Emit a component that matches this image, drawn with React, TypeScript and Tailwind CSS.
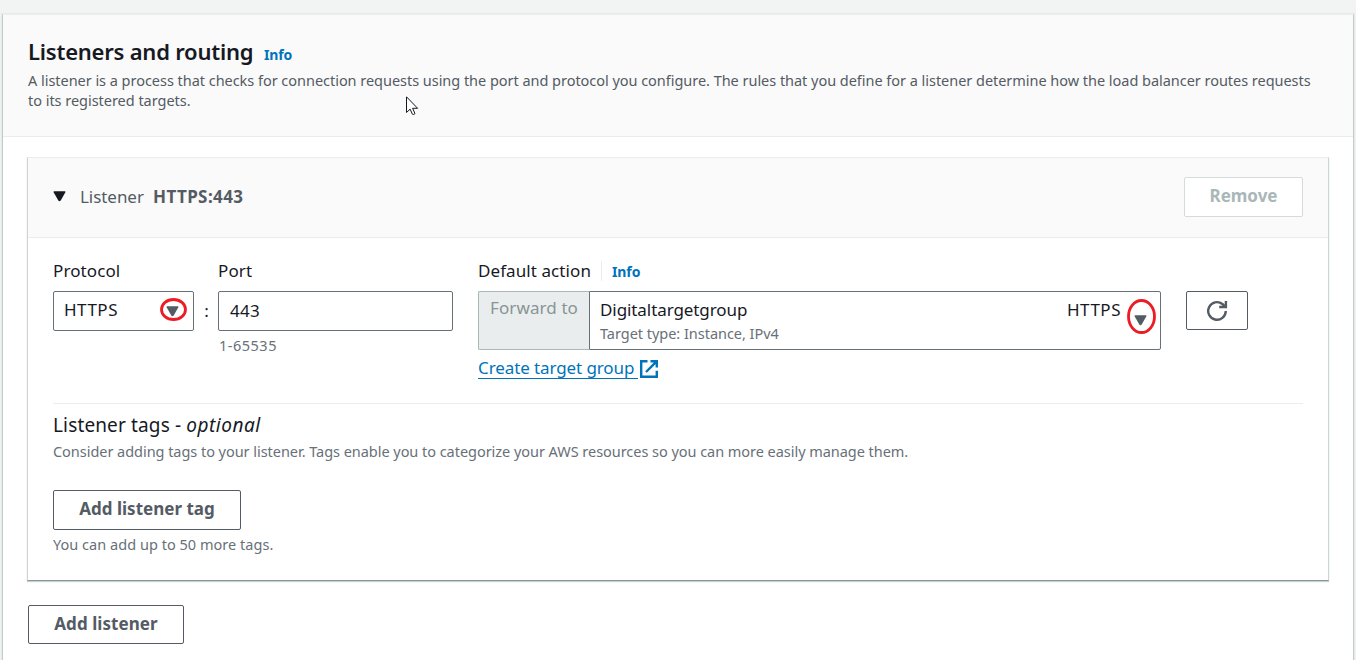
import React from "react";

function Caret({ className = "" }: { className?: string }) {
  return (
    <svg viewBox="0 0 13 11" className={`block h-[11px] w-[13px] shrink-0 ${className}`} fill="currentColor">
      <path d="M1.2 0.3h10.6q1.1 0 0.6 1L7.7 9.6q-1.2 1.5-2.4 0L0.6 1.3Q0.1 0.3 1.2 0.3z" />
    </svg>
  );
}

function Ring({ className = "", rx, ry }: { className?: string; rx: number; ry: number }) {
  const w = rx * 2 + 3;
  const h = ry * 2 + 3;
  return (
    <svg width={w} height={h} viewBox={`0 0 ${w} ${h}`} className={`pointer-events-none absolute ${className}`} fill="none">
      <ellipse cx={w / 2} cy={h / 2} rx={rx} ry={ry} stroke="#ed1c24" strokeWidth="2.8" />
    </svg>
  );
}

function Pointer() {
  return (
    <svg viewBox="0 0 13 20" className="pointer-events-none absolute left-[406px] top-[96px] h-5 w-[13px]">
      <path
        d="M0.5 0.8V16.5L4.1 13.1L6.4 18.2Q7.8 19 9 17.6L6.6 12.3H11.6z"
        fill="#fff"
        stroke="#16191f"
        strokeWidth="1"
      />
    </svg>
  );
}

function OutlineButton({ children, className = "" }: { children: React.ReactNode; className?: string }) {
  return (
    <button
      className={`flex items-center justify-center rounded-[2px] border bg-white pb-0.5 text-[17px] leading-6 font-bold whitespace-nowrap ${className}`}
    >
      {children}
    </button>
  );
}

export default function App() {
  return (
    <div className="relative h-[660px] w-[1356px] overflow-hidden bg-[#f2f3f3] pt-[14px] pl-0.5 font-['Noto_Sans',sans-serif] text-[#16191f]">
      <section className="h-[660px] w-[1352px] border-x border-t border-x-[#c3cbcb] border-t-[#eaeded] bg-white shadow-[0_0_1px_1px_#e6eaea]">
        <header className="h-[122px] border-b border-[#eaeded] bg-[#fafafa] pt-[21px] pl-[25px]">
          <div className="flex items-baseline whitespace-nowrap">
            <h2 className="w-[236px] text-[22px] leading-[30px] font-semibold tracking-[-0.22px]">Listeners and routing</h2>
            <a className="text-[14px] font-bold tracking-[-0.15px] text-[#0073bb]">Info</a>
          </div>
          <p className="pt-1 text-[14.5px] leading-5 whitespace-nowrap text-[#545b64]">
            <span className="block tracking-[-0.033px]">
              A listener is a process that checks for connection requests using the port and protocol you configure. The
              rules that you define for a listener determine how the load balancer routes requests
            </span>
            <span className="block tracking-[-0.03px]">to its registered targets.</span>
          </p>
        </header>

        <div className="px-6 pt-5">
          <div className="h-[424px] w-[1302px] border border-t-[#eaeded] border-x-[#cdd4d5] border-b-[#879596] bg-white shadow-[0_1px_1px_0_#c9d0d1]">
            <div className="flex h-20 items-center justify-between border-b border-[#eaeded] bg-[#fafafa] pr-[25px] pb-0.5 pl-[25px]">
              <div className="flex items-center text-[17px] leading-6 whitespace-nowrap text-[#545b64]">
                <Caret className="-mt-px text-[#16191f]" />
                <span className="ml-3.5 w-[73px] tracking-[-0.05px]">Listener</span>
                <span className="font-bold tracking-[0.4px]">HTTPS:443</span>
              </div>
              <OutlineButton className="h-10 w-[119px] border-[#d5dbdb] text-[#aab7b8]">Remove</OutlineButton>
            </div>

            <div className="px-[25px] pt-[21px]">
              <div className="flex h-[145px] items-start border-b border-[#eaeded] text-[17px] whitespace-nowrap">
                <div className="w-[141px]">
                  <label className="block leading-6 tracking-[0.1px]">Protocol</label>
                  <div className="relative mt-2 flex h-10 items-center justify-between rounded-[2px] border border-[#687078] bg-white pr-[14px] pb-0.5 pl-2.5">
                    <span className="tracking-[0.5px]">HTTPS</span>
                    <Caret className="mt-0.5 text-[#545b64]" />
                    <Ring rx={12} ry={10} className="top-[6px] left-[105.5px]" />
                  </div>
                </div>
                <span className="mt-10 w-6 pl-px text-center leading-6">:</span>
                <div className="w-[235px]">
                  <label className="block leading-6 tracking-[0.1px]">Port</label>
                  <div className="mt-2 flex h-10 items-center rounded-[2px] border border-[#687078] bg-white pl-[11px] tracking-[0.3px]">
                    443
                  </div>
                  <div className="pt-[3px] pl-px text-[14.5px] leading-[22px] tracking-[0.5px] text-[#687078]">1-65535</div>
                </div>
                <div className="ml-[25px] w-[683px]">
                  <div className="flex h-6 items-center">
                    <label className="w-[123px] leading-6 tracking-[0.08px]">Default action</label>
                    <a className="flex h-5 items-center border-l border-[#eaeded] pl-2.5 text-[14px] font-bold tracking-[-0.1px] text-[#0073bb]">
                      Info
                    </a>
                  </div>
                  <div className="mt-2 flex h-[59px]">
                    <div className="w-[111px] rounded-l-[2px] border border-r-0 border-[#aab7b8] bg-[#eaeded] pt-1 pl-[11px] leading-6 tracking-[0.1px] text-[#879596]">
                      Forward to
                    </div>
                    <div className="relative flex w-[572px] rounded-r-[2px] border border-[#687078] bg-white pt-1.5 pl-2.5">
                      <div className="w-[467px]">
                        <div className="leading-6 tracking-[-0.08px]">Digitaltargetgroup</div>
                        <div className="-mt-px text-[14.5px] leading-6 tracking-[-0.03px] text-[#687078]">
                          Target type: Instance, IPv4
                        </div>
                      </div>
                      <span className="w-[66.5px] leading-6 tracking-[0.5px]">HTTPS</span>
                      <Caret className="mt-[17px] text-[#545b64]" />
                      <Ring rx={13} ry={16} className="top-[7px] left-[537px]" />
                    </div>
                  </div>
                  <div className="flex items-start pt-1.5 text-[#0073bb]">
                    <a className="h-[23px] w-[160px] border-b border-[#0073bb] leading-6 tracking-[-0.1px]">Create target group</a>
                    <svg viewBox="0 0 18 18" className="mt-1 ml-0.5 h-[18px] w-[18px]" fill="none" stroke="currentColor" strokeWidth="2.4">
                      <path d="M7.5 1.2H1.2v15.6h15.6v-6" />
                      <path d="M10.5 1.2H16.8v6.3M16.4 1.6L6 12" />
                    </svg>
                  </div>
                </div>
                <button className="mt-8 ml-[25px] flex h-[39px] w-[62px] items-center justify-center rounded-[2px] border border-[#545b64] bg-white">
                  <svg viewBox="0 0 22 22" className="h-[22px] w-[22px]" fill="none" stroke="#545b64" strokeWidth="2.4">
                    <path d="M19.8 11A8.8 8.8 0 1 1 16.4 4L18.6 6" />
                    <path d="M19.9 1V7H13.2" />
                  </svg>
                </button>
              </div>

              <h3 className="pt-[7px] text-[19px] leading-7 tracking-[0.14px] whitespace-nowrap">
                Listener tags - <em className="tracking-[0.5px]">optional</em>
              </h3>
              <p className="text-[14.5px] leading-[25px] tracking-[-0.04px] whitespace-nowrap text-[#687078]">
                Consider adding tags to your listener. Tags enable you to categorize your AWS resources so you can more
                easily manage them.
              </p>
              <OutlineButton className="mt-[26px] h-10 w-[188px] border-[#545b64] text-[#545b64]">Add listener tag</OutlineButton>
              <p className="pt-[3px] text-[14.5px] leading-[22px] tracking-[0.03px] text-[#687078]">
                You can add up to 50 more tags.
              </p>
            </div>
          </div>
          <OutlineButton className="mt-6 ml-px h-[39px] w-[156px] border-[#545b64] tracking-[0.06px] text-[#545b64]">Add listener</OutlineButton>
        </div>
      </section>
      <Pointer />
    </div>
  );
}
